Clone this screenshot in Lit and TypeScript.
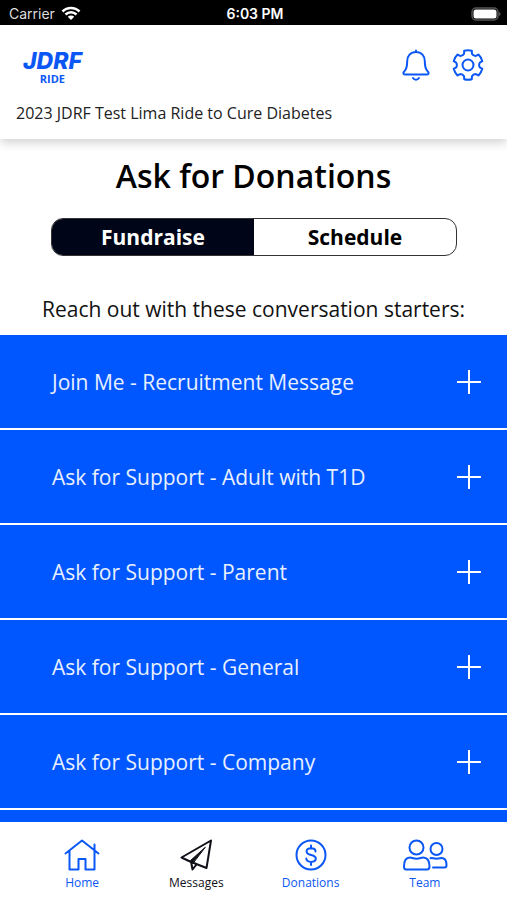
import { LitElement, html, css, svg } from "lit";
import { customElement, state } from "lit/decorators.js";
import { classMap } from "lit/directives/class-map.js";

const starters = [
  "Join Me - Recruitment Message",
  "Ask for Support - Adult with T1D",
  "Ask for Support - Parent",
  "Ask for Support - General",
  "Ask for Support - Company",
];

const homeIcon = svg`<svg viewBox="0 0 36 32" width="36" height="32">
  <path d="M1.500 14.500 18 1.500 34.500 14.500M5.500 12v18.500h9V20h7v10.500h9V12M30.500 11V5.500" /></svg>`;
const planeIcon = svg`<svg viewBox="0 0 32 32" width="32" height="32">
  <path d="M31 1.500 1.500 18.500 10 22.500 26.500 29 31 1.500ZM11 22.500 12.500 30.500 16.500 25.500" />
  <path d="M25 8.500 10.500 21.500 12.500 24.500Z" fill="currentColor" stroke-width="1" /></svg>`;
const dollarIcon = svg`<svg viewBox="0 0 32 32" width="32" height="32">
  <circle cx="16" cy="16" r="14.500" />
  <path d="M20.500 12.500c0-2-1.800-3.200-4.400-3.200-2.700 0-4.500 1.300-4.500 3.300 0 4.600 9.200 2.300 9.200 7 0 2.100-1.900 3.300-4.700 3.300-2.800 0-4.800-1.300-4.800-3.500M16 6.500v3M16 23v3" /></svg>`;
const teamIcon = svg`<svg viewBox="0 0 46 32" width="46" height="32">
  <circle cx="14.500" cy="8.500" r="7" />
  <path d="M8 18.500c2 0 3 1.200 6.500 1.200s4.500-1.200 6.500-1.200c4.500 0 6.500 4 6.500 9 0 2-1 3-2.500 3h-21C2.500 30.500 2 29.500 2 27.500c0-5 1.500-9 6-9Z" />
  <circle cx="34.500" cy="10" r="6" />
  <path d="M28.500 19.200c2-.6 3 .5 6 .5s3.500-.7 5-.7c3.500 0 5 3.300 5 7.300 0 1.600-.8 2.200-2 2.200H31" /></svg>`;

const tabs = [
  { label: "Home", icon: homeIcon },
  { label: "Messages", icon: planeIcon },
  { label: "Donations", icon: dollarIcon },
  { label: "Team", icon: teamIcon },
];

// Six-toothed outline around the centre of a 32 x 32 box.
function gearPath(): string {
  const points: string[] = [];
  const polar = (r: number, deg: number) => {
    const a = (deg * Math.PI) / 180;
    return `${(16 + r * Math.sin(a)).toFixed(2)} ${(16 - r * Math.cos(a)).toFixed(2)}`;
  };
  for (let i = 0; i < 6; i++) {
    const a = i * 60;
    points.push(`${i ? "L" : "M"}${polar(14.8, a - 15)}`);
    points.push(`A14.8 14.8 0 0 1 ${polar(14.8, a + 15)}`);
    points.push(`L${polar(12, a + 19)}`);
    points.push(`Q${polar(10.4, a + 30)} ${polar(12, a + 41)}`);
  }
  return points.join("") + "Z";
}

@customElement("app-root")
export class AppRoot extends LitElement {
  @state() private view = "Fundraise";
  @state() private page = "Messages";

  static styles = css`
    :host {
      display: flex;
      flex-direction: column;
      height: 100vh;
      overflow: hidden;
      background: #fff;
      color: #000;
      font-family: "Open Sans", "Noto Sans", sans-serif;
    }
    * { box-sizing: border-box; }
    button {
      font: inherit;
      color: inherit;
      background: none;
      border: 0;
      padding: 0;
      margin: 0;
      cursor: pointer;
    }
    svg {
      display: block;
      fill: none;
      stroke: currentColor;
      stroke-width: 2;
      stroke-linecap: round;
      stroke-linejoin: round;
    }
    .status {
      flex: none;
      display: grid;
      grid-template-columns: 1fr auto 1fr;
      align-items: center;
      height: 25px;
      padding: 2px 6px 0 9px;
      background: #000;
      color: #fff;
      font: 14px/20px Inter, sans-serif;
    }
    .carrier { display: flex; align-items: center; gap: 6px; color: #ddd; }
    .time { font-weight: 600; }
    .battery { justify-self: end; }
    .wifi { fill: none; stroke: #fff; stroke-linecap: butt; }
    .header {
      flex: none;
      position: relative;
      background: #fff;
      padding: 24px 23px 14px 16px;
      box-shadow: 0 3px 10px rgba(0, 0, 0, 0.2);
    }
    .top { display: flex; justify-content: space-between; height: 38px; }
    .logo {
      display: flex;
      flex-direction: column;
      align-items: center;
      margin-left: 7px;
      color: #0b57f5;
      text-decoration: none;
    }
    .brand { font: italic 800 23px/24px Inter, sans-serif; }
    .ride { font: 700 11px/12px "Open Sans", sans-serif; }
    .actions { display: flex; gap: 22px; color: #0b57f5; }
    .actions button { height: 30px; }
    .event { margin: 0; padding-top: 14px; font-size: 16px; line-height: 24px; color: #222; }
    main { flex: 1; min-height: 0; overflow: hidden; display: flex; flex-direction: column; }
    h1 {
      margin: 0;
      padding-top: 15px;
      text-align: center;
      font-size: 32px;
      line-height: 44px;
      font-weight: 600;
    }
    .switch {
      flex: none;
      display: flex;
      height: 38px;
      margin: 20px 50px 0 51px;
      border: 1px solid #333;
      border-radius: 12px;
      overflow: hidden;
    }
    .option { flex: 1; font-size: 21px; font-weight: 700; line-height: 28px; }
    .option.on { background: #000618; color: #fff; }
    .hint {
      margin: 0;
      padding: 39px 0 12px;
      text-align: center;
      font-size: 21px;
      line-height: 28px;
      color: #111;
    }
    ul { flex: 1; list-style: none; margin: 0; padding: 0; background: #0057ff; }
    .row {
      display: flex;
      align-items: center;
      justify-content: space-between;
      width: 100%;
      height: 95px;
      padding: 0 25px 0 52px;
      border-bottom: 2px solid #fff;
      color: #e8f0ff;
      font-size: 21px;
      line-height: 28px;
      text-align: left;
    }
    .plus { color: #fff; stroke-linecap: butt; }
    nav {
      flex: none;
      display: flex;
      height: 78px;
      padding: 0 25px;
      background: #fff;
    }
    .tab {
      flex: 1;
      display: flex;
      flex-direction: column;
      align-items: center;
      gap: 2px;
      padding-top: 17px;
      color: #0b57f5;
      font-size: 12px;
      line-height: 20px;
      text-decoration: none;
    }
    .tab.on { color: #101018; }
  `;

  render() {
    return html`
      <div class="status">
        <span class="carrier">Carrier
          <svg class="wifi" viewBox="0 0 20 15" width="20" height="15" aria-hidden="true">
            <path d="M1.500 5.500a12 12 0 0 1 17 0M4.500 8.500a8 8 0 0 1 11 0" stroke-width="2.500" />
            <path d="M10 14 6.800 10.800a4.600 4.600 0 0 1 6.400 0Z" fill="#fff" stroke="none" />
          </svg>
        </span>
        <span class="time">6:03 PM</span>
        <svg class="battery" viewBox="0 0 30 14" width="30" height="14" aria-hidden="true">
          <rect x="1" y="1" width="26" height="12" rx="4" stroke="#555" stroke-width="1.500" />
          <rect x="2.500" y="2.500" width="23" height="9" rx="2.500" fill="#fff" stroke="none" />
          <path d="M28.200 5a2.200 2.200 0 0 1 0 4Z" fill="#666" stroke="none" />
        </svg>
      </div>
      <header class="header">
        <div class="top">
          <a class="logo" href="#home"><span class="brand">JDRF</span><span class="ride">RIDE</span></a>
          <div class="actions">
            <button aria-label="Notifications">
              <svg viewBox="0 0 28 32" width="28" height="32">
                <path d="M14 1.500V3M14 3C8.500 3 5.200 7 5.200 12c0 6-.7 8.500-3 10.500C.8 23.800 1.200 25.500 3 25.500h22c1.800 0 2.200-1.700.8-3-2.300-2-3-4.500-3-10.500C22.800 7 19.500 3 14 3ZM11 29c1.500 2.200 4.500 2.200 6 0" />
              </svg>
            </button>
            <button aria-label="Settings">
              <svg viewBox="0 0 32 32" width="32" height="32">
                <path d=${gearPath()} /><circle cx="16" cy="16" r="5.500" />
              </svg>
            </button>
          </div>
        </div>
        <p class="event">2023 JDRF Test Lima Ride to Cure Diabetes</p>
      </header>
      <main>
        <h1>Ask for Donations</h1>
        <div class="switch">
          ${["Fundraise", "Schedule"].map(
            (v) => html`<button
              class=${classMap({ option: true, on: v === this.view })}
              aria-pressed=${v === this.view}
              @click=${() => (this.view = v)}
            >${v}</button>`
          )}
        </div>
        <p class="hint">Reach out with these conversation starters:</p>
        <ul>
          ${starters.map(
            (s) => html`<li><button class="row" aria-expanded="false">
              <span>${s}</span>
              <svg class="plus" viewBox="0 0 26 26" width="26" height="26" aria-hidden="true">
                <path d="M1 13h24M13 1v24" />
              </svg>
            </button></li>`
          )}
        </ul>
      </main>
      <nav aria-label="Main">
        ${tabs.map(
          (t) => html`<a
            class=${classMap({ tab: true, on: t.label === this.page })}
            href="#${t.label.toLowerCase()}"
            @click=${() => (this.page = t.label)}
          >${t.icon}<span>${t.label}</span></a>`
        )}
      </nav>
    `;
  }
}
